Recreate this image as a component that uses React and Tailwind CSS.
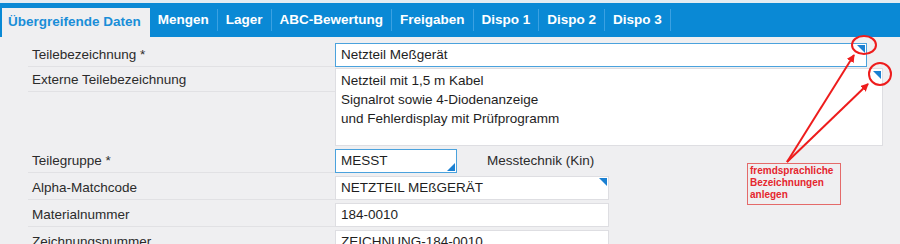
import React from "react";

// Artikelstamm – Reiter "Übergreifende Daten" mit Hinweis auf fremdsprachliche Bezeichnungen

const TABS = ["Mengen", "Lager", "ABC-Bewertung", "Freigaben", "Dispo 1", "Dispo 2", "Dispo 3"];

function Corner({ pos }) {
    // kleines blaues Dreieck in der Ecke eines Feldes
    if (pos === "br") {
        return <span className="absolute right-[1px] bottom-[1px] w-[8px] h-[8px] bg-[#1b80d2] [clip-path:polygon(100%_0,100%_100%,0_100%)]" />;
    }
    return <span className="absolute right-[1px] top-[1px] w-[8px] h-[8px] bg-[#1b80d2] [clip-path:polygon(0_0,100%_0,100%_100%)]" />;
}

function Label({ children }) {
    return (
        <div className="w-[307px] h-[24px] shrink-0 border-b border-[#e1e1e4] pl-[4px] pt-[2px] flex items-center text-[#2b2b2b]">
            {children}
        </div>
    );
}

function Field({ value, width, focused, corner }) {
    return (
        <div className={`relative h-[24px] ${width} bg-white border ${focused ? "border-[#4aa2dd]" : "border-[#dedee2]"} px-[5px] pt-[1px] flex items-center text-[#1e1e1e]`}>
            {value}
            {corner && <Corner pos={corner} />}
        </div>
    );
}

export default function App() {
    return (
        <div className="relative w-[900px] h-[244px] overflow-hidden bg-[#efeff1] text-[13.5px] font-['Liberation_Sans',Arial,sans-serif]">
            <div className="h-[3px] bg-[#e4ecf2]" />
            {/* Reiterleiste */}
            <div className="h-[34px] bg-[#0a89d5] flex items-end pl-[2px]">
                <div className="h-[29px] bg-[#efeff1] pl-[6px] pr-[9px] flex items-center text-[13.5px] font-bold text-[#1a8ed8]">
                    Übergreifende Daten
                </div>
                {TABS.map(t => (
                    <div key={t} className="h-full flex items-center">
                        <span className="px-[8px] text-[13.5px] font-bold text-white">{t}</span>
                        <span className="w-px h-[22px] bg-[#3ba1e2]" />
                    </div>
                ))}
            </div>

            {/* Formular */}
            <div className="pl-[28px] pt-[6px] flex flex-col">
                <div className="flex">
                    <Label>Teilebezeichnung *</Label>
                    <Field value="Netzteil Meßgerät" width="w-[532px]" focused corner="tr" />
                </div>
                <div className="flex mt-[1px]">
                    <Label>Externe Teilebezeichnung</Label>
                    <div className="relative w-[548px] h-[78px] bg-white border border-[#dedee2] px-[5px] pt-[2px] leading-[19px] text-[#1e1e1e]">
                        <div>Netzteil mit 1,5 m Kabel</div>
                        <div>Signalrot sowie 4-Diodenanzeige</div>
                        <div>und Fehlerdisplay mit Prüfprogramm</div>
                        <span className="absolute right-[1px] top-[2px] w-[8px] h-[8px] bg-[#1b80d2] [clip-path:polygon(0_0,100%_0,100%_100%)]" />
                    </div>
                </div>
                <div className="flex mt-[3px] items-center">
                    <Label>Teilegruppe *</Label>
                    <Field value="MESST" width="w-[122px]" focused corner="br" />
                    <span className="ml-[30px] text-[#2b2b2b]">Messtechnik (Kin)</span>
                </div>
                <div className="flex mt-[3px]">
                    <Label>Alpha-Matchcode</Label>
                    <Field value="NETZTEIL MEßGERÄT" width="w-[274px]" corner="tr" />
                </div>
                <div className="flex mt-[3px]">
                    <Label>Materialnummer</Label>
                    <Field value="184-0010" width="w-[274px]" />
                </div>
                <div className="flex mt-[3px]">
                    <Label>Zeichnungsnummer</Label>
                    <Field value="ZEICHNUNG-184-0010" width="w-[274px]" />
                </div>
            </div>

            {/* Anmerkung */}
            <div className="absolute left-[747px] top-[163px] w-[94px] h-[42px] border border-[#e46a6a] pl-[2px] pt-[1px] text-[10px] leading-[12px] font-bold text-[#e5262e]">
                fremdsprachliche<br />Bezeichnungen<br />anlegen
            </div>
            <svg className="absolute left-0 top-0 pointer-events-none" width="900" height="244" viewBox="0 0 900 244">
                <defs>
                    <marker id="ah" markerWidth="8" markerHeight="8" refX="7" refY="4" orient="auto" markerUnits="userSpaceOnUse">
                        <path d="M0,0 L8,4 L0,8 z" fill="#ee1c1c" />
                    </marker>
                </defs>
                <line x1="787" y1="162" x2="854" y2="55" stroke="#ee1c1c" strokeWidth="2" markerEnd="url(#ah)" />
                <line x1="787" y1="162" x2="868" y2="84" stroke="#ee1c1c" strokeWidth="2" markerEnd="url(#ah)" />
                <ellipse cx="864" cy="45" rx="12" ry="9" fill="none" stroke="#ee1c1c" strokeWidth="2" />
                <ellipse cx="880" cy="74" rx="11" ry="11" fill="none" stroke="#ee1c1c" strokeWidth="2" />
            </svg>
        </div>
    );
}
